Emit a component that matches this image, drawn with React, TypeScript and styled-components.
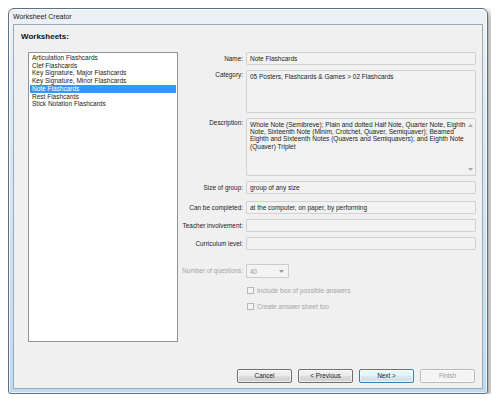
import styled, { createGlobalStyle } from "styled-components";

const GlobalStyle = createGlobalStyle`
  body {
    margin: 8px;
    background: #ffffff;
    font-family: "Liberation Sans", Arial, sans-serif;
  }
`;

const worksheets = [
  "Articulation Flashcards",
  "Clef Flashcards",
  "Key Signature, Major Flashcards",
  "Key Signature, Minor Flashcards",
  "Note Flashcards",
  "Rest Flashcards",
  "Stick Notation Flashcards",
];

const description = [
  "Whole Note (Semibreve); Plain and dotted Half Note, Quarter Note, Eighth",
  "Note, Sixteenth Note (Minim, Crotchet, Quaver, Semiquaver); Beamed",
  "Eighth and Sixteenth Notes (Quavers and Semiquavers); and Eighth Note",
  "(Quaver) Triplet",
];

function App() {
  const selected = 4;
  return (
    <>
      <GlobalStyle />
      <Window>
        <TitleBar>Worksheet Creator</TitleBar>
        <Client>
          <Heading>Worksheets:</Heading>
          <Main>
            <ListBox>
              {worksheets.map((w, idx) => (
                <ListItem key={w} $selected={idx === selected}>
                  {w}
                </ListItem>
              ))}
            </ListBox>
            <Form>
              <Row $mt={0}>
                <Label>Name:</Label>
                <Field $h={13}>Note Flashcards</Field>
              </Row>
              <Row $mt={5} $top>
                <Label $top>Category:</Label>
                <Field $h={43} $multi>
                  05 Posters, Flashcards &amp; Games &gt; 02 Flashcards
                </Field>
              </Row>
              <Row $mt={5} $top>
                <Label $top>Description:</Label>
                <Field $h={58} $multi $fs={6.55}>
                  {description.map((line) => (
                    <div key={line}>{line}</div>
                  ))}
                  <ScrollBar>
                    <svg width="5" height="3" viewBox="0 0 5 3">
                      <path d="M0 3 L2.5 0 L5 3 Z" fill="#a8a8a8" />
                    </svg>
                    <svg width="5" height="3" viewBox="0 0 5 3">
                      <path d="M0 0 L2.5 3 L5 0 Z" fill="#a8a8a8" />
                    </svg>
                  </ScrollBar>
                </Field>
              </Row>
              <Row $mt={5}>
                <Label>Size of group:</Label>
                <Field $h={13}>group of any size</Field>
              </Row>
              <Row $mt={7}>
                <Label>Can be completed:</Label>
                <Field $h={13}>at the computer, on paper, by performing</Field>
              </Row>
              <Row $mt={5}>
                <Label>Teacher involvement:</Label>
                <Field $h={13} />
              </Row>
              <Row $mt={5}>
                <Label>Curriculum level:</Label>
                <Field $h={13} />
              </Row>
              <Row $mt={14}>
                <Label $disabled>Number of questions:</Label>
                <Combo>
                  <span>40</span>
                  <svg width="5" height="3" viewBox="0 0 5 3">
                    <path d="M0 0 L2.5 3 L5 0 Z" fill="#9a9a9a" />
                  </svg>
                </Combo>
              </Row>
              <Row $mt={8}>
                <span />
                <Check>
                  <Box />
                  Include box of possible answers
                </Check>
              </Row>
              <Row $mt={7}>
                <span />
                <Check>
                  <Box />
                  Create answer sheet too
                </Check>
              </Row>
            </Form>
          </Main>
          <Footer>
            <Button>Cancel</Button>
            <Button>&lt; Previous</Button>
            <Button $variant="default">Next &gt;</Button>
            <Button $variant="disabled">Finish</Button>
          </Footer>
        </Client>
      </Window>
    </>
  );
}

const Window = styled.div`
  width: 480px;
  height: 386px;
  box-sizing: border-box;
  border: 1px solid #5d6f80;
  border-radius: 6px 6px 3px 3px;
  background: linear-gradient(180deg, #eef1f4 0%, #e1ebf4 20%, #cbe0f2 70%, #bfdaf0 100%);
  box-shadow: 2px 3px 7px rgba(0, 0, 0, 0.45), inset 0 0 0 1px rgba(255, 255, 255, 0.7);
  padding: 0 4px 4px 4px;
  display: flex;
  flex-direction: column;
`;

const TitleBar = styled.div`
  height: 15px;
  line-height: 15px;
  font-size: 7px;
  color: #1a1a1a;
`;

const Client = styled.div`
  flex: 1;
  background: #f0f0f0;
  border: 1px solid #9bacbd;
  display: flex;
  flex-direction: column;
`;

const Heading = styled.div`
  padding: 7px 0 0 7px;
  font-size: 8px;
  line-height: 10px;
  font-weight: bold;
  color: #111;
`;

const Main = styled.div`
  margin-top: 10px;
  padding-left: 14px;
  display: flex;
  align-items: flex-start;
`;

const ListBox = styled.div`
  width: 150px;
  height: 290px;
  box-sizing: border-box;
  border: 1px solid #8e939b;
  background: #ffffff;
  padding: 1px 1px;
`;

const ListItem = styled.div<{ $selected?: boolean }>`
  font-size: 6.5px;
  line-height: 7.7px;
  padding-left: 2px;
  color: ${(p) => (p.$selected ? "#ffffff" : "#1a1a1a")};
  background: ${(p) => (p.$selected ? "#3399ff" : "transparent")};
`;

const Form = styled.div`
  display: flex;
  flex-direction: column;
`;

const Row = styled.div<{ $mt: number; $top?: boolean }>`
  display: grid;
  grid-template-columns: 65px 230px;
  column-gap: 3px;
  margin-top: ${(p) => p.$mt}px;
  align-items: ${(p) => (p.$top ? "start" : "center")};
`;

const Label = styled.div<{ $top?: boolean; $disabled?: boolean }>`
  font-size: 6.4px;
  line-height: 7.5px;
  text-align: right;
  white-space: nowrap;
  padding-top: ${(p) => (p.$top ? "1px" : "0")};
  color: ${(p) => (p.$disabled ? "#a5a5a5" : "#222222")};
`;

const Field = styled.div<{ $h: number; $multi?: boolean; $fs?: number }>`
  position: relative;
  height: ${(p) => p.$h}px;
  box-sizing: border-box;
  border: 1px solid #cfd1d4;
  border-radius: 1px;
  background: #f2f2f2;
  font-size: ${(p) => p.$fs ?? 6.5}px;
  line-height: ${(p) => (p.$multi ? "7.4px" : "11px")};
  padding: ${(p) => (p.$multi ? "1.5px 3px 0 3px" : "0 3px")};
  color: #222222;
  white-space: nowrap;
  overflow: hidden;
`;

const ScrollBar = styled.div`
  position: absolute;
  top: 0;
  right: 0;
  bottom: 0;
  width: 10px;
  display: flex;
  flex-direction: column;
  justify-content: space-between;
  align-items: center;
  padding: 5px 0 4px;
  box-sizing: border-box;
`;

const Combo = styled.div`
  width: 43px;
  height: 14px;
  box-sizing: border-box;
  border: 1px solid #c9cbce;
  border-radius: 1px;
  background: #f3f3f3;
  display: flex;
  align-items: center;
  justify-content: space-between;
  padding: 0 4px 0 3px;
  font-size: 6.4px;
  color: #9a9a9a;
`;

const Check = styled.div`
  display: flex;
  align-items: center;
  gap: 3px;
  font-size: 6.6px;
  line-height: 9px;
  color: #a5a5a5;
  padding-left: 1px;
`;

const Box = styled.span`
  width: 7px;
  height: 7px;
  box-sizing: border-box;
  border: 1px solid #b8b8b8;
  background: #f4f4f4;
`;

const Footer = styled.div`
  margin-top: auto;
  padding: 0 7px 5px 0;
  display: flex;
  justify-content: flex-end;
  gap: 6px;
`;

const Button = styled.div<{ $variant?: "default" | "disabled" }>`
  width: 55px;
  height: 14px;
  box-sizing: border-box;
  border-radius: 2px;
  border: 1px solid
    ${(p) =>
      p.$variant === "default" ? "#3c7fb1" : p.$variant === "disabled" ? "#b5b9bc" : "#707070"};
  background: ${(p) =>
    p.$variant === "disabled"
      ? "#f4f4f4"
      : p.$variant === "default"
      ? "linear-gradient(180deg, #f2f8fc 0%, #e6f1f8 48%, #d6e9f5 52%, #c9e1f1 100%)"
      : "linear-gradient(180deg, #f3f3f3 0%, #ebebeb 48%, #dddddd 52%, #cfcfcf 100%)"};
  box-shadow: inset 0 0 0 1px rgba(255, 255, 255, 0.6);
  font-size: 6.4px;
  line-height: 12px;
  text-align: center;
  color: ${(p) => (p.$variant === "disabled" ? "#9a9a9a" : "#1a1a1a")};
`;

export default App;
